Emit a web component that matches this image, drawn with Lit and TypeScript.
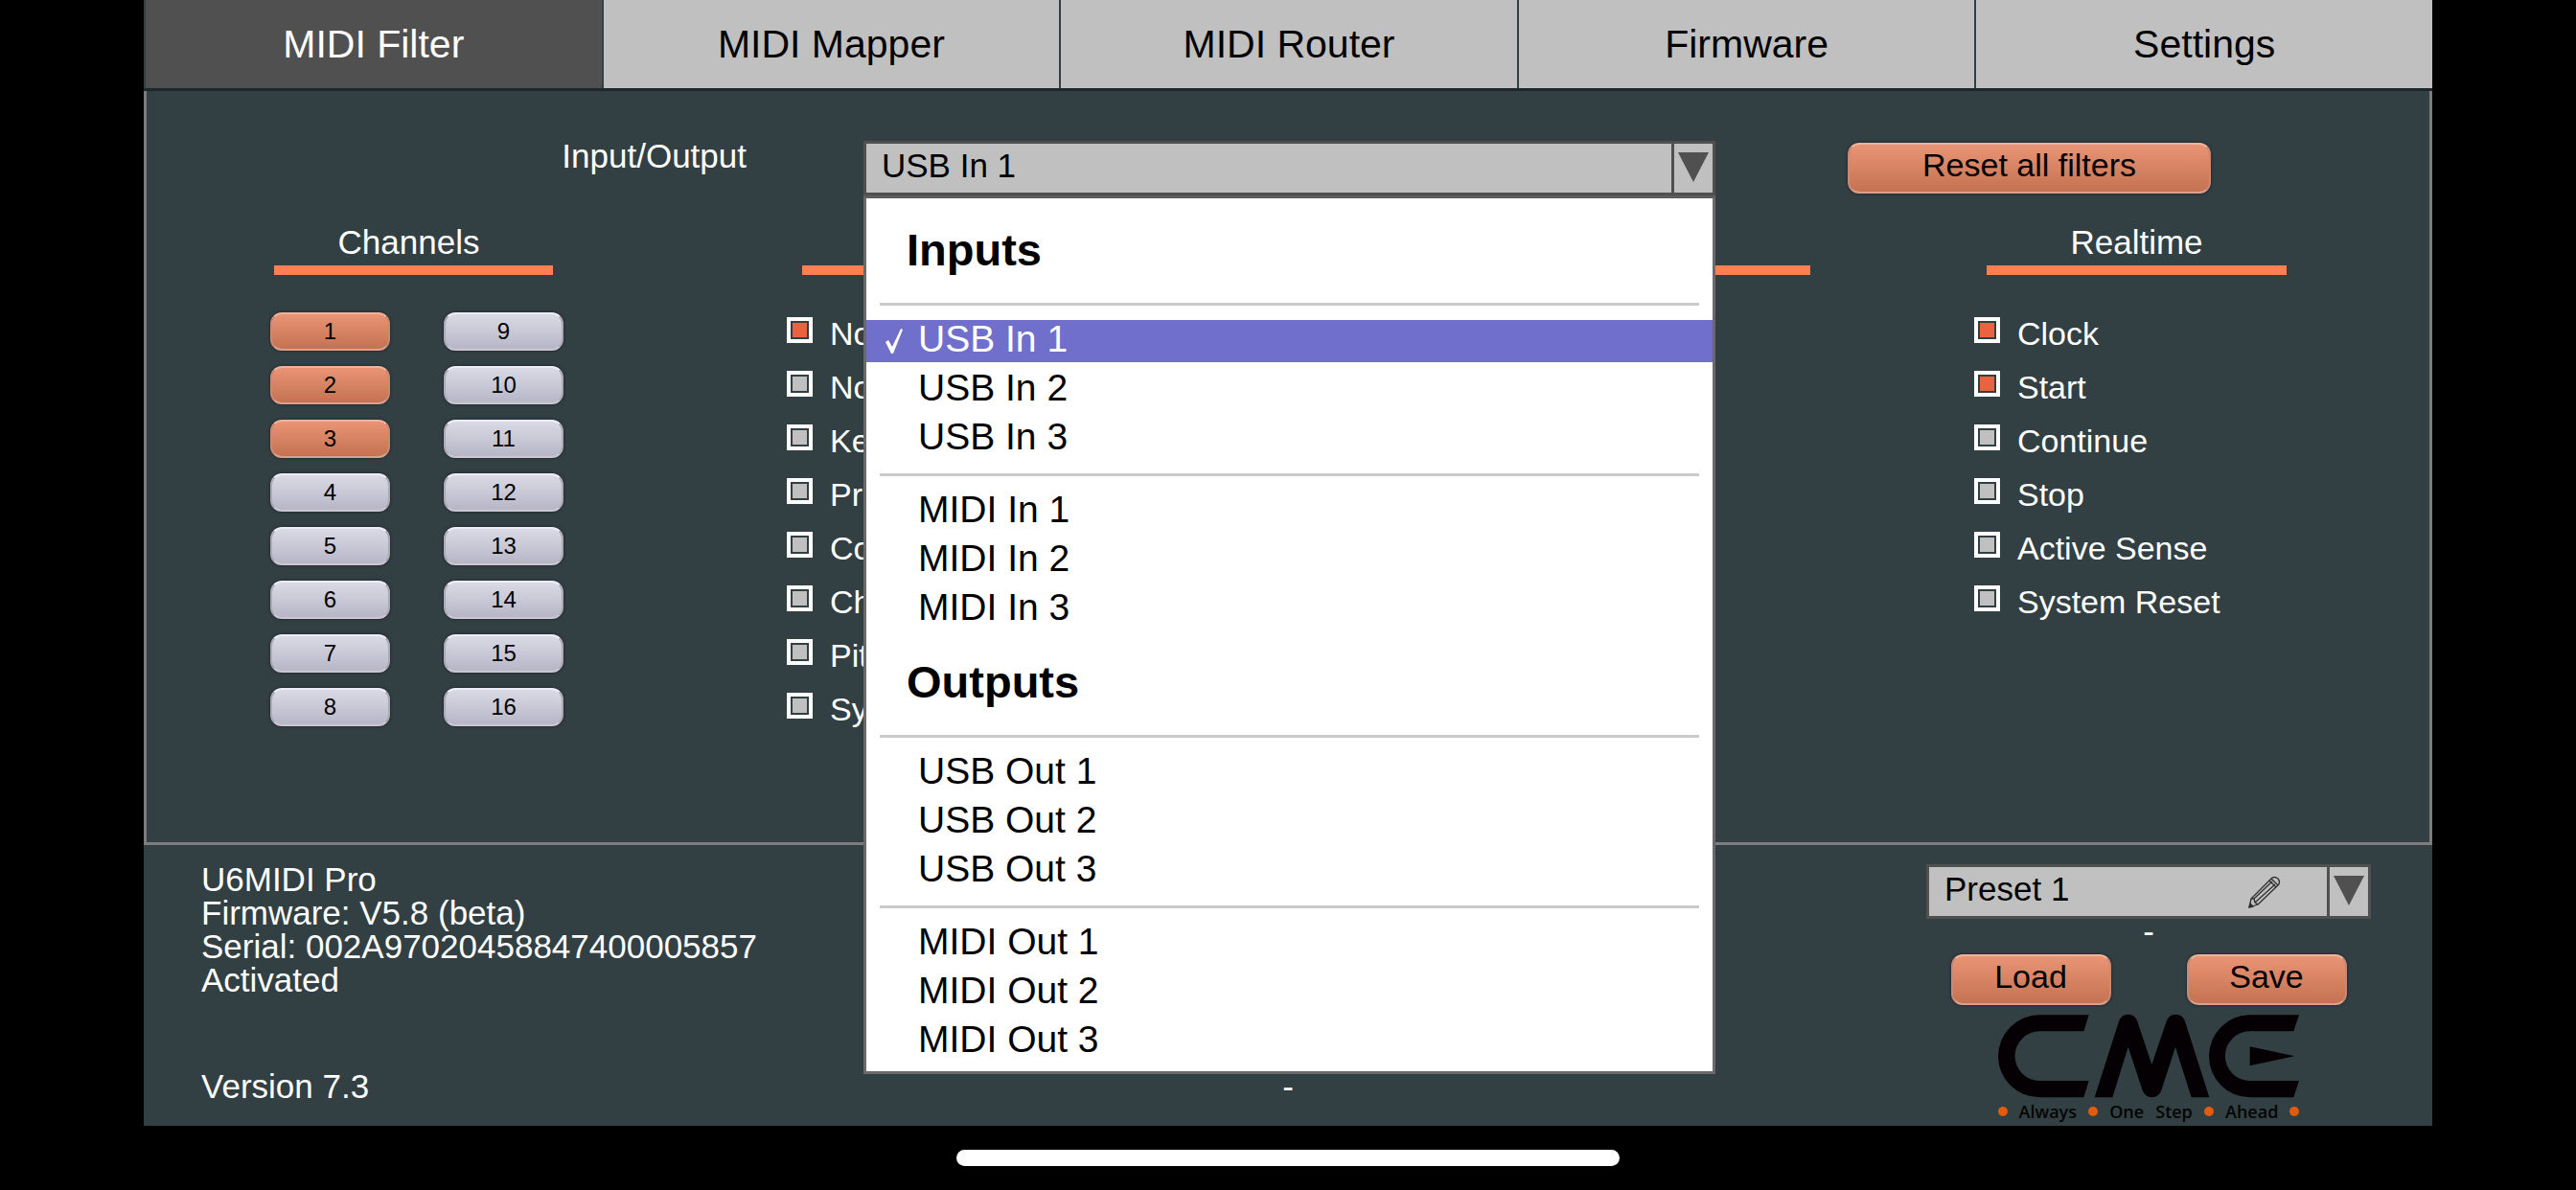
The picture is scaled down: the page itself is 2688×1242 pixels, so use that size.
import { LitElement, html, css, svg } from "lit";
import { customElement, state } from "lit/decorators.js";
import { classMap } from "lit/directives/class-map.js";

const TABS = ["MIDI Filter", "MIDI Mapper", "MIDI Router", "Firmware", "Settings"];

const PORT_GROUPS = [
  {
    title: "Inputs",
    sets: [
      ["USB In 1", "USB In 2", "USB In 3"],
      ["MIDI In 1", "MIDI In 2", "MIDI In 3"],
    ],
  },
  {
    title: "Outputs",
    sets: [
      ["USB Out 1", "USB Out 2", "USB Out 3"],
      ["MIDI Out 1", "MIDI Out 2", "MIDI Out 3"],
    ],
  },
];

const MESSAGES = [
  "Note On",
  "Note Off",
  "Key Pressure",
  "Program Change",
  "Control Change",
  "Channel Pressure",
  "Pitch Bend",
  "System Exclusive",
];

const REALTIME = ["Clock", "Start", "Continue", "Stop", "Active Sense", "System Reset"];

const arrow = html`<span class="arrow" aria-hidden="true">
  <svg width="32" height="31" viewBox="0 0 32 31"><path d="M0 0H32L16 31Z" fill="#505050" /></svg>
</span>`;

const pencil = svg`<svg width="34" height="34" viewBox="0 0 34 34" fill="none" stroke="#303030" stroke-width="1.3" stroke-linejoin="round">
  <path d="M1 33L3 24L24 3Q27 0 31 3Q34 7 31 10L10 30Z" />
  <path d="M3 24L6 24L7 28L10 30M6 24L25 6M7 28L28 9M22 5L29 12M24 3L31 10" />
  <path d="M1 33L2 29L5 32Z" fill="#303030" />
</svg>`;

@customElement("app-root")
export class AppRoot extends LitElement {
  @state() private tab = "MIDI Filter";
  @state() private port = "USB In 1";
  @state() private menuOpen = true;
  @state() private channels = new Set([1, 2, 3]);
  @state() private checked = new Set(["Note On", "Clock", "Start"]);

  static styles = css`
    :host {
      display: flex;
      flex-direction: column;
      box-sizing: border-box;
      min-height: 100vh;
      padding: 0 150px;
      background: #000;
      color: #fff;
      font-family: "Liberation Sans", Arial, sans-serif;
      font-size: 35px;
    }
    *,
    *::before {
      box-sizing: border-box;
    }
    button,
    select,
    input {
      margin: 0;
      font: inherit;
    }
    .tabs {
      display: grid;
      grid-template-columns: repeat(5, 1fr);
      column-gap: 2px;
      padding-left: 2px;
      background: #323f43;
      border-bottom: 3px solid #1e272b;
    }
    .tab {
      height: 92px;
      padding: 0;
      border: 0;
      background: #c0c0c0;
      color: #000;
      font-size: 41px;
    }
    .tab.active {
      background: #505050;
      color: #fff;
    }
    .panel {
      flex: 1;
      padding-top: 52px;
      background: #323f43;
      border: 3px solid #7d7d80;
      border-top: 0;
    }
    .toolbar {
      display: grid;
      grid-template-columns: 748fr 889fr 745fr;
      align-items: center;
    }
    .port-label {
      align-self: start;
      justify-self: end;
      margin-right: 122px;
      line-height: 32px;
    }
    .port {
      position: relative;
    }
    .combo {
      display: flex;
      height: 57px;
      border: 3px solid #505050;
      background: #c0c0c0;
    }
    .combo select {
      flex: 1;
      min-width: 0;
      padding: 0 0 7px 16px;
      border: 0;
      border-radius: 0;
      outline: 0;
      appearance: none;
      background: transparent;
      color: #000;
    }
    .arrow {
      display: flex;
      justify-content: center;
      width: 43px;
      padding-top: 9px;
      border-left: 3px solid #505050;
    }
    .menu {
      position: absolute;
      z-index: 1;
      top: 100%;
      left: 0;
      right: 0;
      padding-bottom: 9px;
      border: 3px solid #6a6a6c;
      border-top-color: #5c5c5c;
      background: #fff;
      color: #000;
      font-size: 39px;
    }
    .group-title {
      height: 95px;
      margin: 0;
      padding-left: 42px;
      font-size: 47px;
      line-height: 108px;
    }
    .menu hr {
      height: 3px;
      margin: 14px 14px 15px;
      border: 0;
      background: #cacaca;
    }
    .options {
      display: grid;
      row-gap: 7px;
    }
    .option {
      display: grid;
      grid-template-columns: 35px 1fr;
      align-items: center;
      height: 44px;
      padding: 0 0 0 19px;
      border: 0;
      background: transparent;
      color: inherit;
      line-height: 39px;
      text-align: left;
    }
    .option .name {
      grid-column: 2;
      align-self: start;
    }
    .option.selected {
      background: #7070cc;
      color: #fff;
    }
    .push {
      border: 2px solid;
      border-color: #f0b39c #c98a74 #d9a08c;
      border-radius: 12px;
      background: linear-gradient(#e99475, #c47252);
      box-shadow: 0 0 2px 1px #272f33;
      color: #000;
    }
    .action {
      height: 53px;
      padding: 0 0 6px;
      font-size: 34px;
    }
    .reset {
      width: 379px;
      margin-left: 138px;
    }
    .filters {
      display: grid;
      grid-template-columns: 539fr 1239fr 475fr;
      margin-top: 29px;
      padding-left: 129px;
    }
    .heading {
      margin: 0 0 39px;
      padding-bottom: 4px;
      border-bottom: 10px solid #ff7f50;
      font-size: 35px;
      font-weight: normal;
      line-height: 40px;
      text-align: center;
    }
    .heading.channels {
      width: 291px;
      margin-left: 4px;
      padding-right: 10px;
    }
    .heading.messages {
      width: 1052px;
      margin-left: 16px;
    }
    .heading.realtime {
      width: 313px;
      margin-left: 13px;
    }
    .channel-grid {
      display: grid;
      grid-template-rows: repeat(8, 40px);
      grid-auto-flow: column;
      grid-auto-columns: 125px;
      gap: 16px 56px;
    }
    .channel {
      padding: 0;
      border-color: #ececf6 #aaa9b4 #cbc6d0;
      background: linear-gradient(#dadae6, #b6b6c6);
      font-size: 24px;
    }
    .channel.on {
      border-color: #f0b39c #c98a74 #d9a08c;
      background: linear-gradient(#e99475, #c47252);
    }
    .checks {
      display: grid;
      row-gap: 12px;
      justify-content: start;
    }
    .check {
      display: flex;
      align-items: flex-start;
      gap: 18px;
      font-size: 34px;
      line-height: 44px;
    }
    .check input {
      width: 27px;
      height: 27px;
      margin-top: 5px;
      padding: 2px;
      border: 4px solid #fff;
      appearance: none;
      background: #c0c0c0 content-box;
    }
    .check input:checked {
      background-color: #ea6240;
    }
    .footer {
      display: grid;
      grid-template-columns: 1fr auto 1fr;
      background: #323f43;
    }
    .info {
      display: flex;
      flex-direction: column;
      justify-content: space-between;
      padding: 18px 0 24px 60px;
      line-height: 35px;
    }
    .info p {
      margin: 0;
    }
    .status {
      align-self: end;
      padding-bottom: 24px;
      line-height: 35px;
    }
    .preset {
      display: flex;
      flex-direction: column;
      align-items: center;
      justify-self: end;
      width: 464px;
      margin: 20px 64px 4px 0;
    }
    .preset .combo {
      align-self: stretch;
    }
    .edit {
      width: 82px;
      padding: 0 48px 0 0;
      border: 0;
      background: transparent;
    }
    .edit svg {
      display: block;
    }
    .preset-status {
      line-height: 26px;
    }
    .preset-actions {
      display: flex;
      gap: 79px;
      margin-top: 11px;
    }
    .preset-actions .action {
      width: 167px;
    }
    .logo {
      width: 315px;
      margin-top: 9px;
    }
    .logo svg {
      display: block;
      width: 100%;
    }
    .tagline {
      display: flex;
      align-items: center;
      justify-content: space-between;
      margin-top: 3px;
      color: #050505;
      font-family: "Open Sans", "Noto Sans", sans-serif;
      font-size: 18px;
      font-weight: 600;
      line-height: 22px;
    }
    .dot {
      width: 10px;
      height: 10px;
      border-radius: 50%;
      background: #e35b0c;
    }
    .home {
      display: flex;
      justify-content: center;
      height: 67px;
      padding-top: 25px;
    }
    .home-bar {
      width: 692px;
      height: 17px;
      border-radius: 9px;
      background: #fff;
    }
  `;

  private toggleChannel(n: number) {
    const next = new Set(this.channels);
    next.has(n) ? next.delete(n) : next.add(n);
    this.channels = next;
  }

  private toggleCheck(name: string) {
    const next = new Set(this.checked);
    next.has(name) ? next.delete(name) : next.add(name);
    this.checked = next;
  }

  private pick(name: string) {
    this.port = name;
    this.menuOpen = false;
  }

  private openMenu(e: Event) {
    e.preventDefault();
    this.menuOpen = !this.menuOpen;
  }

  private reset() {
    this.channels = new Set();
    this.checked = new Set();
  }

  private renderChecks(names: string[]) {
    return html`<div class="checks">
      ${names.map(
        (name) => html`<label class="check">
          <input type="checkbox" .checked=${this.checked.has(name)} @change=${() => this.toggleCheck(name)} />
          <span>${name}</span>
        </label>`
      )}
    </div>`;
  }

  private renderOption(name: string) {
    const selected = name === this.port;
    return html`<button
      class=${classMap({ option: true, selected })}
      role="option"
      aria-selected=${selected}
      @click=${() => this.pick(name)}
    >
      ${selected
        ? html`<svg width="20" height="26" viewBox="0 0 20 26" aria-hidden="true">
            <path d="M1 14L4 12L8 19L17 0L19 1L9 26H7Z" fill="#fff" />
          </svg>`
        : null}
      <span class="name">${name}</span>
    </button>`;
  }

  private renderMenu() {
    return html`<div class="menu" role="listbox" aria-label="Input/Output">
      ${PORT_GROUPS.map(
        (group) => html`
          <h3 class="group-title">${group.title}</h3>
          ${group.sets.map(
            (names) => html`<hr />
              <div class="options">${names.map((name) => this.renderOption(name))}</div>`
          )}
        `
      )}
    </div>`;
  }

  render() {
    return html`
      <nav class="tabs">
        ${TABS.map(
          (name) => html`<button
            class=${classMap({ tab: true, active: name === this.tab })}
            @click=${() => (this.tab = name)}
          >
            ${name}
          </button>`
        )}
      </nav>

      <main class="panel">
        <div class="toolbar">
          <label class="port-label" for="port">Input/Output</label>
          <div class="port">
            <div class="combo">
              <select id="port" .value=${this.port} @mousedown=${this.openMenu}>
                ${PORT_GROUPS.flatMap((g) => g.sets.flat()).map(
                  (name) => html`<option ?selected=${name === this.port}>${name}</option>`
                )}
              </select>
              ${arrow}
            </div>
            ${this.menuOpen ? this.renderMenu() : null}
          </div>
          <button class="push action reset" @click=${this.reset}>Reset all filters</button>
        </div>

        <div class="filters">
          <section>
            <h2 class="heading channels">Channels</h2>
            <div class="channel-grid">
              ${Array.from({ length: 16 }, (_, i) => i + 1).map(
                (n) => html`<button
                  class=${classMap({ push: true, channel: true, on: this.channels.has(n) })}
                  aria-pressed=${this.channels.has(n)}
                  @click=${() => this.toggleChannel(n)}
                >
                  ${n}
                </button>`
              )}
            </div>
          </section>
          <section>
            <h2 class="heading messages">Messages</h2>
            ${this.renderChecks(MESSAGES)}
          </section>
          <section>
            <h2 class="heading realtime">Realtime</h2>
            ${this.renderChecks(REALTIME)}
          </section>
        </div>
      </main>

      <footer class="footer">
        <div class="info">
          <div>
            <p>U6MIDI Pro</p>
            <p>Firmware: V5.8 (beta)</p>
            <p>Serial: 002A97020458847400005857</p>
            <p>Activated</p>
          </div>
          <p>Version 7.3</p>
        </div>
        <div class="status">-</div>
        <div class="preset">
          <div class="combo">
            <select aria-label="Preset">
              <option>Preset 1</option>
            </select>
            <button class="edit" aria-label="Rename preset">${pencil}</button>
            ${arrow}
          </div>
          <div class="preset-status">-</div>
          <div class="preset-actions">
            <button class="push action">Load</button>
            <button class="push action">Save</button>
          </div>
          <div class="logo">
            <svg viewBox="75 51 945 264" role="img" aria-label="CME" fill="#050003">
              <path d="M359 55H205A130 129 0 0 0 205 313H343L359 261H205A77 77 0 0 1 205 106H343Z" />
              <path
                d="M377 313L453 75Q461 53 482 53Q503 53 511 75L556 210L602 75Q610 53 631 53Q652 53 660 75L736 313H680L630 155L586 291Q578 313 556 313Q535 313 527 291L482 155L433 313Z"
              />
              <path d="M1017 55H863A128 129 0 0 0 863 313H1000L1017 261H863A77 77 0 0 1 863 106H1000Z" />
              <path d="M863 154L1003 184L863 214Z" />
            </svg>
            <div class="tagline">
              <span class="dot"></span><span>Always</span><span class="dot"></span><span>One</span><span>Step</span
              ><span class="dot"></span><span>Ahead</span><span class="dot"></span>
            </div>
          </div>
        </div>
      </footer>

      <div class="home"><div class="home-bar"></div></div>
    `;
  }
}
